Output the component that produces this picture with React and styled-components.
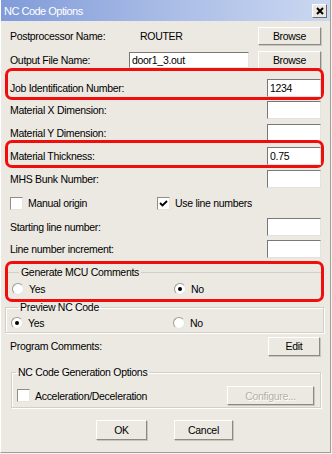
import React from 'react';
import styled, { createGlobalStyle } from 'styled-components';

const GlobalStyle = createGlobalStyle`
  html, body {
    margin: 0;
    padding: 0;
    background: #f4f3ef;
  }
  body {
    font-family: "Liberation Sans", Arial, sans-serif;
    font-size: 10.5px;
    letter-spacing: -0.3px;
    color: #000;
  }
`;

const App = () => {
  return (
    <>
      <GlobalStyle />
      <Window>
        <TitleBar>
          <Title>NC Code Options</Title>
          <CloseButton>
            <svg width="8" height="8" viewBox="0 0 8 8">
              <path d="M1 1 L7 7 M7 1 L1 7" stroke="#000" strokeWidth="2" />
            </svg>
          </CloseButton>
        </TitleBar>

        <Body>
          <FileRow $top={6}>
            <Label>Postprocessor Name:</Label>
            <Value>ROUTER</Value>
            <Button $w={63} $h={18}>Browse</Button>
          </FileRow>
          <FileRow $top={6}>
            <Label>Output File Name:</Label>
            <Field $w={120} $h={16} readOnly value="door1_3.out" />
            <Button $w={63} $h={18}>Browse</Button>
          </FileRow>

          <Highlight $top={-1} $pad={8}>
            <Row>
              <Label>Job Identification Number:</Label>
              <Field readOnly value="1234" />
            </Row>
          </Highlight>

          <Row $top={1}>
            <Label>Material X Dimension:</Label>
            <Field readOnly value="" />
          </Row>
          <Row $top={5}>
            <Label>Material Y Dimension:</Label>
            <Field readOnly value="" />
          </Row>

          <Highlight $top={-2} $pad={4}>
            <Row>
              <Label>Material Thickness:</Label>
              <Field readOnly value="0.75" />
            </Row>
          </Highlight>

          <Row $top={2}>
            <Label>MHS Bunk Number:</Label>
            <Field readOnly value="" />
          </Row>

          <ChoiceRow $top={6} $col={147}>
            <Choice>
              <CheckBox />
              <span>Manual origin</span>
            </Choice>
            <Choice>
              <CheckBox>
                <svg width="9" height="9" viewBox="0 0 9 9">
                  <polyline points="1,4 3.5,6.5 8,2" fill="none" stroke="#000" strokeWidth="1.8" />
                </svg>
              </CheckBox>
              <span>Use line numbers</span>
            </Choice>
          </ChoiceRow>

          <Row $top={6}>
            <Label>Starting line number:</Label>
            <Field readOnly value="" />
          </Row>
          <Row $top={4}>
            <Label>Line number increment:</Label>
            <Field readOnly value="" />
          </Row>

          <Highlight $top={3} $pad={0} $wide>
            <Group $flat $top={2}>
              <Legend $left={7}>Generate MCU Comments</Legend>
              <ChoiceRow $top={2} $col={162}>
                <Choice>
                  <Radio />
                  <span>Yes</span>
                </Choice>
                <Choice>
                  <Radio $on />
                  <span>No</span>
                </Choice>
              </ChoiceRow>
            </Group>
          </Highlight>

          <Group $top={-1} $wide>
            <Legend $left={7}>Preview NC Code</Legend>
            <ChoiceRow $top={1} $col={162}>
              <Choice>
                <Radio $on />
                <span>Yes</span>
              </Choice>
              <Choice>
                <Radio />
                <span>No</span>
              </Choice>
            </ChoiceRow>
          </Group>

          <Row $top={4}>
            <Label>Program Comments:</Label>
            <Button $w={52} $h={19} style={{ marginRight: 1 }}>Edit</Button>
          </Row>

          <Group $top={11} $inset>
            <Legend $left={-1}>NC Code Generation Options</Legend>
            <Row $top={8} $h={19}>
              <Choice>
                <CheckBox />
                <span>Acceleration/Deceleration</span>
              </Choice>
              <Button $w={87} $h={19} disabled>Configure...</Button>
            </Row>
          </Group>

          <Actions>
            <Button $w={51} $h={20}>OK</Button>
            <Button $w={59} $h={20}>Cancel</Button>
          </Actions>
        </Body>
      </Window>
    </>
  );
};

export default App;

const Window = styled.div`
  box-sizing: border-box;
  width: 331px;
  height: 453px;
  display: flex;
  flex-direction: column;
  background: #ece9e2;
  border-left: 1px solid #fff;
  border-right: 1px solid #a19e95;
  border-bottom: 1px solid #a19e95;
`;

const TitleBar = styled.div`
  height: 21px;
  flex: none;
  display: flex;
  align-items: center;
  justify-content: space-between;
  padding: 0 3px 0 3px;
  background: linear-gradient(90deg, #809bd9 0%, #a9bce6 50%, #cbd8f1 100%);
`;

const Title = styled.span`
  color: #fff;
  font-size: 11px;
  letter-spacing: -0.5px;
`;

const CloseButton = styled.div`
  box-sizing: border-box;
  width: 15px;
  height: 14px;
  display: flex;
  align-items: center;
  justify-content: center;
  background: #ece9e2;
  border: 1px solid;
  border-color: #fff #6f6d68 #6f6d68 #fff;
`;

const Body = styled.div`
  display: flex;
  flex-direction: column;
  padding: 0 9px 0 9px;
`;

const Row = styled.div`
  display: flex;
  align-items: center;
  justify-content: space-between;
  height: ${p => p.$h || 18}px;
  margin-top: ${p => p.$top || 0}px;
`;

const FileRow = styled.div`
  display: grid;
  grid-template-columns: 119px 120px 1fr;
  align-items: center;
  height: 18px;
  margin-top: ${p => p.$top}px;

  & > button {
    justify-self: end;
  }
`;

const Label = styled.span`
  white-space: nowrap;
`;

const Value = styled.span`
  padding-left: 11px;
`;

const Field = styled.input`
  box-sizing: border-box;
  width: ${p => p.$w || 54}px;
  height: ${p => p.$h || 18}px;
  margin: 0;
  padding: 0 2px;
  font: inherit;
  letter-spacing: inherit;
  color: #000;
  background: #fff;
  border: 1px solid;
  border-color: #7a7873 #e4e2dc #e4e2dc #7a7873;
  outline: none;
`;

const Button = styled.button`
  box-sizing: border-box;
  width: ${p => p.$w}px;
  height: ${p => p.$h}px;
  margin: 0;
  padding: 0;
  font: inherit;
  letter-spacing: inherit;
  color: #000;
  background: #ece9e2;
  border: 1px solid;
  border-color: #fff #8c8a84 #8c8a84 #fff;
  box-shadow: 1px 1px 0 #c9c6bd;

  &:disabled {
    color: #b3b0a6;
    text-shadow: 1px 1px 0 #fff;
  }
`;

const Highlight = styled.div`
  position: relative;
  z-index: 1;
  margin: ${p => p.$top}px -3px 0 -5px;
  padding: ${p => p.$pad}px 0 0 ${p => (p.$wide ? 0 : 2)}px;
  border: 3px solid #f20d0d;
  border-radius: 7px;
`;

const Group = styled.fieldset`
  margin: ${p => p.$top}px ${p => (p.$wide ? '-3px' : '0')} 0 ${p => (p.$wide ? '-5px' : p.$inset ? '1px' : '0')};
  padding: 0 ${p => (p.$inset ? 6 : 0)}px ${p => (p.$flat ? 1 : p.$inset ? 2 : 0)}px ${p => (p.$flat ? 4 : 5)}px;
  min-width: 0;
  border: 2px groove #fff;
  border-color: #d2cfc6 #fff #fff #d2cfc6;
  border-style: solid;
  box-shadow: inset 1px 1px 0 #fff, 1px 1px 0 #d2cfc6;
  ${p => p.$flat && `
    border-width: 2px 0 0 0;
    box-shadow: none;
    border-top: 1px solid #d2cfc6;
  `}
  ${p => p.$wide && !p.$flat && `
    border-width: 1px;
    border-color: #d2cfc6;
    box-shadow: inset 1px 1px 0 #fff, 1px 1px 0 #fff;
  `}
  ${p => p.$inset && `
    border-width: 1px;
    border-color: #d2cfc6;
    box-shadow: inset 1px 1px 0 #fff, 1px 1px 0 #fff;
  `}
`;

const Legend = styled.legend`
  margin-left: ${p => p.$left}px;
  padding: 0 2px;
  line-height: 12px;
  height: 12px;
`;

const ChoiceRow = styled.div`
  display: grid;
  grid-template-columns: ${p => p.$col}px 1fr;
  align-items: center;
  height: 18px;
  margin-top: ${p => p.$top || 0}px;
`;

const Choice = styled.label`
  display: flex;
  align-items: center;
  gap: 5px;
`;

const CheckBox = styled.span`
  box-sizing: border-box;
  width: 13px;
  height: 13px;
  display: flex;
  align-items: center;
  justify-content: center;
  background: #fff;
  border: 1px solid;
  border-color: #8f8d86 #e6e4de #e6e4de #8f8d86;
`;

const Radio = styled.span`
  box-sizing: border-box;
  width: 12px;
  height: 12px;
  margin-left: 0;
  display: flex;
  align-items: center;
  justify-content: center;
  border-radius: 50%;
  background: #fff;
  border: 1px solid;
  border-color: #9c9a93 #e6e4de #e6e4de #9c9a93;

  &::after {
    content: '';
    display: ${p => (p.$on ? 'block' : 'none')};
    width: 4px;
    height: 4px;
    border-radius: 50%;
    background: #000;
  }
`;

const Actions = styled.div`
  display: flex;
  justify-content: center;
  gap: 27px;
  margin-top: 12px;
  padding-right: 2px;
`;
